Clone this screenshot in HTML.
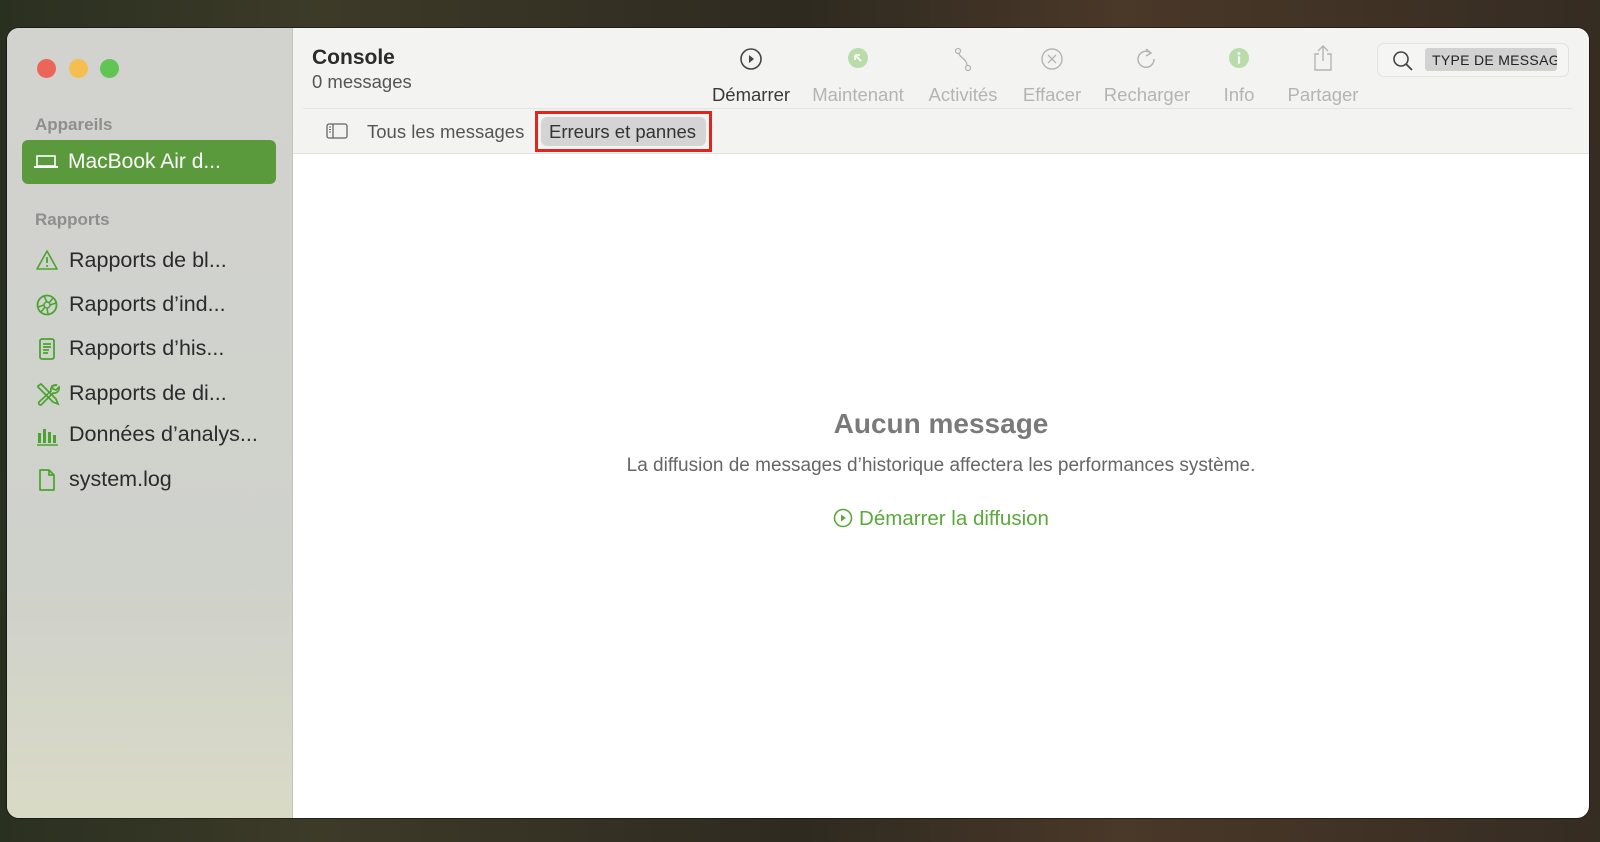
<!DOCTYPE html>
<html><head><meta charset="utf-8"><style>
*{margin:0;padding:0;box-sizing:border-box}
body{width:1600px;height:842px;overflow:hidden;font-family:"Liberation Sans",sans-serif;background:linear-gradient(90deg,#2a3020 0%,#3d3a28 20%,#2e2a20 50%,#4a3828 70%,#352c22 100%);position:relative}
.win{position:absolute;left:7px;top:28px;width:1582px;height:790px;border-radius:12px;overflow:hidden;background:#fff;box-shadow:0 0 0 1px rgba(0,0,0,.4)}
.side{position:absolute;left:0;top:0;width:286px;height:100%;background:linear-gradient(180deg,#d2d3cf 0%,#cfd1cb 70%,#d9dac6 100%);border-right:1px solid #c4c4be}
.tl{position:absolute;top:31px;width:19px;height:19px;border-radius:50%}
.sec{position:absolute;left:28px;font-size:17px;font-weight:bold;color:#8e8f8c}
.pill{position:absolute;left:15px;top:112px;width:254px;height:44px;border-radius:6px;background:#5a9a3c;color:#fff;font-size:21px}
.it{position:absolute;left:0;width:286px;height:40px;font-size:21.5px;color:#2b2b2b}
.it span{position:absolute;left:62px;top:8px}
.it svg{position:absolute;left:28px;top:9px}
.hdr{position:absolute;left:286px;top:0;right:0;height:126px;background:#f3f3f1;border-bottom:1px solid #e2e2e0}
.t{position:absolute;font-size:18.5px;color:#b4b4b4;text-align:center;width:120px;top:56px}
.ic{position:absolute;top:19px}
</style></head><body>
<div class="win">
<div class="side">
<div class="tl" style="left:30px;background:#ec6559"></div>
<div class="tl" style="left:62px;background:#f5bf4f"></div>
<div class="tl" style="left:93px;background:#61c554"></div>
<div class="sec" style="top:87px">Appareils</div>
<div class="pill"><svg style="position:absolute;left:12px;top:15px" width="24" height="14" viewBox="0 0 24 14"><rect x="3" y="1" width="18" height="10" fill="none" stroke="#fff" stroke-width="1.6"/><rect x="0" y="11" width="24" height="2" fill="#fff"/></svg><span style="position:absolute;left:46px;top:10px">MacBook Air d...</span></div>
<div class="sec" style="top:182px">Rapports</div>
<div class="it" style="top:212px"><svg width="24" height="22" viewBox="0 0 24 22"><path d="M12 2L22 20H2Z" fill="none" stroke="#4aa42f" stroke-width="1.6" stroke-linejoin="round"/><path d="M12 8v6" stroke="#4aa42f" stroke-width="1.8"/><circle cx="12" cy="17" r="1" fill="#4aa42f"/></svg><span>Rapports de bl...</span></div>
<div class="it" style="top:256px"><svg width="24" height="24" viewBox="0 0 24 24"><circle cx="12" cy="12" r="9.5" fill="none" stroke="#4aa42f" stroke-width="1.8"/><circle cx="12" cy="12" r="3" fill="none" stroke="#4aa42f" stroke-width="1.5"/><path d="M12 9L9 3M15 12l6-2M12 15l1 6M9 12L3 14M14 10l4-5M10 14l-4 5" stroke="#4aa42f" stroke-width="1.5"/></svg><span>Rapports d’ind...</span></div>
<div class="it" style="top:300px"><svg width="24" height="24" viewBox="0 0 24 24"><rect x="5" y="2" width="14" height="20" rx="2" fill="none" stroke="#4aa42f" stroke-width="1.8"/><path d="M8 7h8M8 10h8M8 13h6M8 16h5" stroke="#4aa42f" stroke-width="1.8"/></svg><span>Rapports d’his...</span></div>
<div class="it" style="top:345px"><svg width="26" height="26" viewBox="0 0 26 26"><path d="M3 4l3-2 15 15 2 5-5-2L3 5z" fill="none" stroke="#4aa42f" stroke-width="1.7"/><path d="M22 3a5 5 0 0 0-6 6L4 20a2 2 0 0 0 2 3l12-12a5 5 0 0 0 6-6l-3 3-3-1-1-3z" fill="none" stroke="#4aa42f" stroke-width="1.7"/></svg><span>Rapports de di...</span></div>
<div class="it" style="top:386px"><svg width="24" height="24" viewBox="0 0 24 24"><path d="M3 10h3v10H3zM8 6h3v14H8zM13 9h3v11h-3zM18 12h3v8h-3z" fill="#4aa42f"/><path d="M2 22h21" stroke="#4aa42f" stroke-width="1.5"/></svg><span>Données d’analys...</span></div>
<div class="it" style="top:431px"><svg width="24" height="24" viewBox="0 0 24 24"><path d="M5 2h9l5 5v15H5z M14 2v5h5" fill="none" stroke="#4aa42f" stroke-width="1.7" stroke-linejoin="round"/></svg><span>system.log</span></div>
</div>
<div class="hdr">
<div style="position:absolute;left:19px;top:18px;font-size:21px;font-weight:bold;color:#2b2b2b">Console</div>
<div style="position:absolute;left:19px;top:43px;font-size:18.5px;color:#555">0 messages</div>
<svg class="ic" style="left:446px" width="24" height="24" viewBox="0 0 24 24"><circle cx="12" cy="12" r="10" fill="none" stroke="#444" stroke-width="1.6"/><path d="M10 8l5 4-5 4z" fill="#444"/></svg>
<div class="t" style="left:398px;color:#3a3a3a">Démarrer</div>
<svg class="ic" style="left:554px" width="22" height="22" viewBox="0 0 22 22"><circle cx="11" cy="11" r="10" fill="#b9dcaa"/><path d="M8 8h5M8 8v5M8 8l6 6" stroke="#fff" stroke-width="1.6"/></svg>
<div class="t" style="left:505px">Maintenant</div>
<svg class="ic" style="left:659px" width="22" height="26" viewBox="0 0 22 26"><circle cx="6" cy="4" r="2.5" fill="none" stroke="#b4b4b4" stroke-width="1.3"/><circle cx="16" cy="21" r="2.5" fill="none" stroke="#b4b4b4" stroke-width="1.3"/><path d="M7 6c0 5 8 5 8 13" fill="none" stroke="#b4b4b4" stroke-width="1.3"/></svg>
<div class="t" style="left:610px">Activités</div>
<svg class="ic" style="left:747px" width="24" height="24" viewBox="0 0 24 24"><circle cx="12" cy="12" r="10" fill="none" stroke="#b4b4b4" stroke-width="1.4"/><path d="M8 8l8 8M16 8l-8 8" stroke="#b4b4b4" stroke-width="1.4"/></svg>
<div class="t" style="left:699px">Effacer</div>
<svg class="ic" style="left:842px" width="24" height="24" viewBox="0 0 24 24"><path d="M16 6a8 8 0 1 0 3 6" fill="none" stroke="#b4b4b4" stroke-width="1.5"/><path d="M11 2l5 4-5 3" fill="none" stroke="#b4b4b4" stroke-width="1.5"/></svg>
<div class="t" style="left:794px">Recharger</div>
<svg class="ic" style="left:935px" width="22" height="22" viewBox="0 0 22 22"><circle cx="11" cy="11" r="10" fill="#b9dcaa"/><circle cx="11" cy="6.5" r="1.4" fill="#fff"/><path d="M11 9.5v7" stroke="#fff" stroke-width="2.2"/></svg>
<div class="t" style="left:886px">Info</div>
<svg class="ic" style="left:1019px;top:16px" width="22" height="28" viewBox="0 0 22 28"><path d="M7 10H3v16h16V10h-4" fill="none" stroke="#b4b4b4" stroke-width="1.4"/><path d="M11 2v15M6 7l5-5 5 5" fill="none" stroke="#b4b4b4" stroke-width="1.4"/></svg>
<div class="t" style="left:970px">Partager</div>
<div style="position:absolute;left:1084px;top:15px;width:192px;height:34px;border:1px solid #e2e2e0;border-radius:7px;background:#f5f5f3"></div>
<svg style="position:absolute;left:1099px;top:22px" width="22" height="22" viewBox="0 0 22 22"><circle cx="9" cy="9" r="7" fill="none" stroke="#444" stroke-width="1.6"/><path d="M14 14l6 6" stroke="#444" stroke-width="1.8"/></svg>
<div style="position:absolute;left:1132px;top:20px;width:132px;height:23px;background:#d2d2d2;border-radius:3px;overflow:hidden;font-size:14px;color:#222;padding:4px 0 0 7px;white-space:nowrap;letter-spacing:.3px">TYPE DE MESSAGE</div>
<div style="position:absolute;left:10px;right:17px;top:80px;height:1px;background:#e4e4e2"></div>
<svg style="position:absolute;left:33px;top:95px" width="22" height="16" viewBox="0 0 22 16"><rect x="1" y="1" width="20" height="14" rx="2" fill="none" stroke="#666" stroke-width="1.3"/><path d="M7 1v14" stroke="#666" stroke-width="1.3"/><path d="M3 4h2M3 6.5h2M3 9h2" stroke="#666" stroke-width="1"/></svg>
<div style="position:absolute;left:74px;top:93px;font-size:18.5px;color:#555">Tous les messages</div>
<div style="position:absolute;left:242px;top:83px;width:177px;height:41px;border:3px solid #e0261c"></div>
<div style="position:absolute;left:248px;top:89px;width:165px;height:29px;background:#d4d4d4;border-radius:6px;font-size:18.5px;color:#333;padding:4px 0 0 8px;white-space:nowrap">Erreurs et pannes</div>
</div>
<div style="position:absolute;left:286px;right:0;top:380px;text-align:center;font-size:28px;font-weight:bold;color:#7a7a7a">Aucun message</div>
<div style="position:absolute;left:286px;right:0;top:427px;text-align:center;font-size:19px;color:#666">La diffusion de messages d’historique affectera les performances système.</div>
<div style="position:absolute;left:286px;right:0;top:479px;text-align:center;font-size:20.5px;color:#5aaa3a"><svg style="vertical-align:-3px;margin-right:6px" width="20" height="20" viewBox="0 0 20 20"><circle cx="10" cy="10" r="8.5" fill="none" stroke="#5aaa3a" stroke-width="1.6"/><path d="M8 6.5l5 3.5-5 3.5z" fill="#5aaa3a"/></svg>Démarrer la diffusion</div>
</div>
</body></html>
